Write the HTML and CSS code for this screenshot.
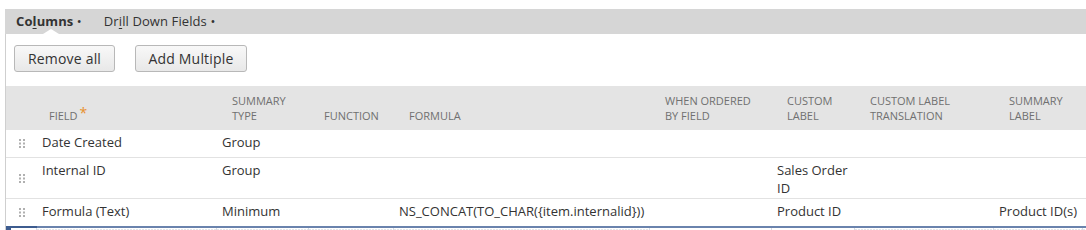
FILE: index.html
```html
<!DOCTYPE html>
<html>
<head>
<meta charset="utf-8">
<link rel="stylesheet" href="styles.css">
</head>
<body>
<div class="tabs">
  <div class="tab active">Co<u>l</u>umns <span class="dot">•</span></div>
  <div class="tab">Dr<u>i</u>ll Down Fields <span class="dot">•</span></div>
</div>
<div class="panel">
  <div class="actions">
    <button class="btn btn-remove">Remove all</button>
    <button class="btn btn-add">Add Multiple</button>
  </div>
  <table class="grid">
    <colgroup>
      <col class="c-handle"><col class="c-field"><col class="c-stype"><col class="c-func"><col class="c-formula"><col class="c-when"><col class="c-custom"><col class="c-trans"><col class="c-slabel"><col class="c-extra">
    </colgroup>
    <thead>
      <tr>
        <th></th>
        <th class="h-field">Field<span class="req">*</span></th>
        <th>Summary<br>Type</th>
        <th>Function</th>
        <th>Formula</th>
        <th>When Ordered<br>By Field</th>
        <th>Custom<br>Label</th>
        <th>Custom Label<br>Translation</th>
        <th>Summary<br>Label</th>
        <th></th>
      </tr>
    </thead>
    <tbody>
      <tr class="r1">
        <td class="handle"><svg width="6" height="9" viewBox="0 0 6 9"><g fill="#b0b0b0"><rect x="0" y="0" width="2" height="2"/><rect x="4" y="0" width="2" height="2"/><rect x="0" y="3.5" width="2" height="2"/><rect x="4" y="3.5" width="2" height="2"/><rect x="0" y="7" width="2" height="2"/><rect x="4" y="7" width="2" height="2"/></g></svg></td>
        <td>Date Created</td><td>Group</td><td></td><td></td><td></td><td></td><td></td><td></td><td></td>
      </tr>
      <tr class="r2">
        <td class="handle"><svg width="6" height="9" viewBox="0 0 6 9"><g fill="#b0b0b0"><rect x="0" y="0" width="2" height="2"/><rect x="4" y="0" width="2" height="2"/><rect x="0" y="3.5" width="2" height="2"/><rect x="4" y="3.5" width="2" height="2"/><rect x="0" y="7" width="2" height="2"/><rect x="4" y="7" width="2" height="2"/></g></svg></td>
        <td>Internal ID</td><td>Group</td><td></td><td></td><td></td><td>Sales Order<br>ID</td><td></td><td></td><td></td>
      </tr>
      <tr class="r3">
        <td class="handle"><svg width="6" height="9" viewBox="0 0 6 9"><g fill="#b0b0b0"><rect x="0" y="0" width="2" height="2"/><rect x="4" y="0" width="2" height="2"/><rect x="0" y="3.5" width="2" height="2"/><rect x="4" y="3.5" width="2" height="2"/><rect x="0" y="7" width="2" height="2"/><rect x="4" y="7" width="2" height="2"/></g></svg></td>
        <td>Formula (Text)</td><td>Minimum</td><td></td><td>NS_CONCAT(TO_CHAR({item.internalid}))</td><td></td><td>Product ID</td><td></td><td>Product ID(s)</td><td></td>
      </tr>
      <tr class="edit-row">
        <td class="e-first"></td><td class="e-dot"></td><td class="e-dot"></td><td class="e-dot"></td><td class="e-dot"></td><td></td><td></td><td class="e-dot"></td><td class="e-dot"></td><td class="e-dot"></td>
      </tr>
    </tbody>
  </table>
</div>
</body>
</html>
```

FILE: styles.css
```css
html, body {
  margin: 0;
  padding: 0;
  background: #ffffff;
  overflow: hidden;
}

body {
  font-family: "Open Sans", "Liberation Sans", sans-serif;
  color: #333333;
  width: 1086px;
  height: 230px;
}

.tabs {
  margin: 9px 0 0 5px;
  height: 25px;
  background: #d6d6d6;
  display: flex;
  align-items: center;
  padding-left: 11px;
  gap: 22px;
  font-size: 13px;
  color: #333333;
}

.tab {
  position: relative;
  white-space: nowrap;
  line-height: 25px;
  letter-spacing: 0.1px;
}

.tab u {
  text-decoration: underline;
  text-underline-offset: 2px;
}

.tab.active {
  font-weight: 700;
}

.tab.active::after {
  content: "";
  position: absolute;
  left: 27px;
  bottom: 0;
  width: 0;
  height: 0;
  border-left: 8px solid transparent;
  border-right: 8px solid transparent;
  border-bottom: 5px solid #ffffff;
}

.tab .dot {
  font-weight: 400;
  font-size: 13px;
}

.panel {
  margin-left: 5px;
  border-left: 1px solid #cfcfcf;
  height: 196px;
  overflow: hidden;
}

.actions {
  display: flex;
  gap: 20px;
  padding: 11px 0 0 8px;
  height: 38px;
  box-sizing: border-box;
  margin-bottom: 14px;
}

.btn {
  font-family: "Open Sans", "Liberation Sans", sans-serif;
  font-size: 14px;
  color: #333333;
  height: 27px;
  padding: 0;
  border: 1px solid #b8b8b8;
  border-radius: 3px;
  background: linear-gradient(#f8f8f8, #e8e8e8);
  line-height: 25px;
  letter-spacing: 0.2px;
}

.btn-remove { width: 101px; }
.btn-add { width: 112px; }

.grid {
  border-collapse: collapse;
  table-layout: fixed;
  width: 1276px;
}

.c-handle { width: 30px; }
.c-field { width: 180px; }
.c-stype { width: 92px; }
.c-func { width: 85px; }
.c-formula { width: 256px; }
.c-when { width: 122px; }
.c-custom { width: 83px; }
.c-trans { width: 139px; }
.c-slabel { width: 89px; }
.c-extra { width: 200px; }

.grid thead th {
  background: #e4e4e4;
  font-size: 11px;
  font-weight: 400;
  color: #707070;
  text-transform: uppercase;
  text-align: left;
  vertical-align: bottom;
  line-height: 15px;
  padding: 7px 4px 7px 16px;
  height: 30px;
  white-space: nowrap;
}

.grid thead th.h-field {
  padding-left: 13px;
}

.req {
  color: #e8912c;
  font-size: 14px;
  margin-left: 2px;
  position: relative;
  top: -2px;
}

.grid tbody td {
  font-size: 13px;
  line-height: 18px;
  padding: 3px 6px 6px 6px;
  vertical-align: top;
  border-bottom: 1px solid #e2e2e2;
  white-space: nowrap;
  height: 18px;
}

.grid tbody td.handle {
  vertical-align: middle;
  padding: 0 0 0 13px;
  line-height: 0;
}

.grid tbody tr.r2 td {
  padding-bottom: 1px;
}

.grid tbody tr.r2 td.handle {
  padding-bottom: 0;
}

.grid tbody tr.r3 td {
  border-bottom: none;
  padding-bottom: 6px;
}

.grid tbody tr.r3 td.handle {
  padding-bottom: 0;
}

.grid tbody tr.edit-row td {
  height: 4px;
  padding: 0;
  border-top: 2px solid #6a83ad;
  border-bottom: none;
  border-left: 1px solid #d8dde6;
}

.grid tbody tr.edit-row td.e-first {
  border-left: none;
  border-top-color: #3d5c8f;
  background: linear-gradient(90deg, #3d5c8f 0 5px, transparent 5px);
}

.grid tbody tr.edit-row td.e-dot {
  background-image: radial-gradient(circle, #c8ccd3 0.6px, transparent 0.8px);
  background-size: 3px 3px;
}
```
